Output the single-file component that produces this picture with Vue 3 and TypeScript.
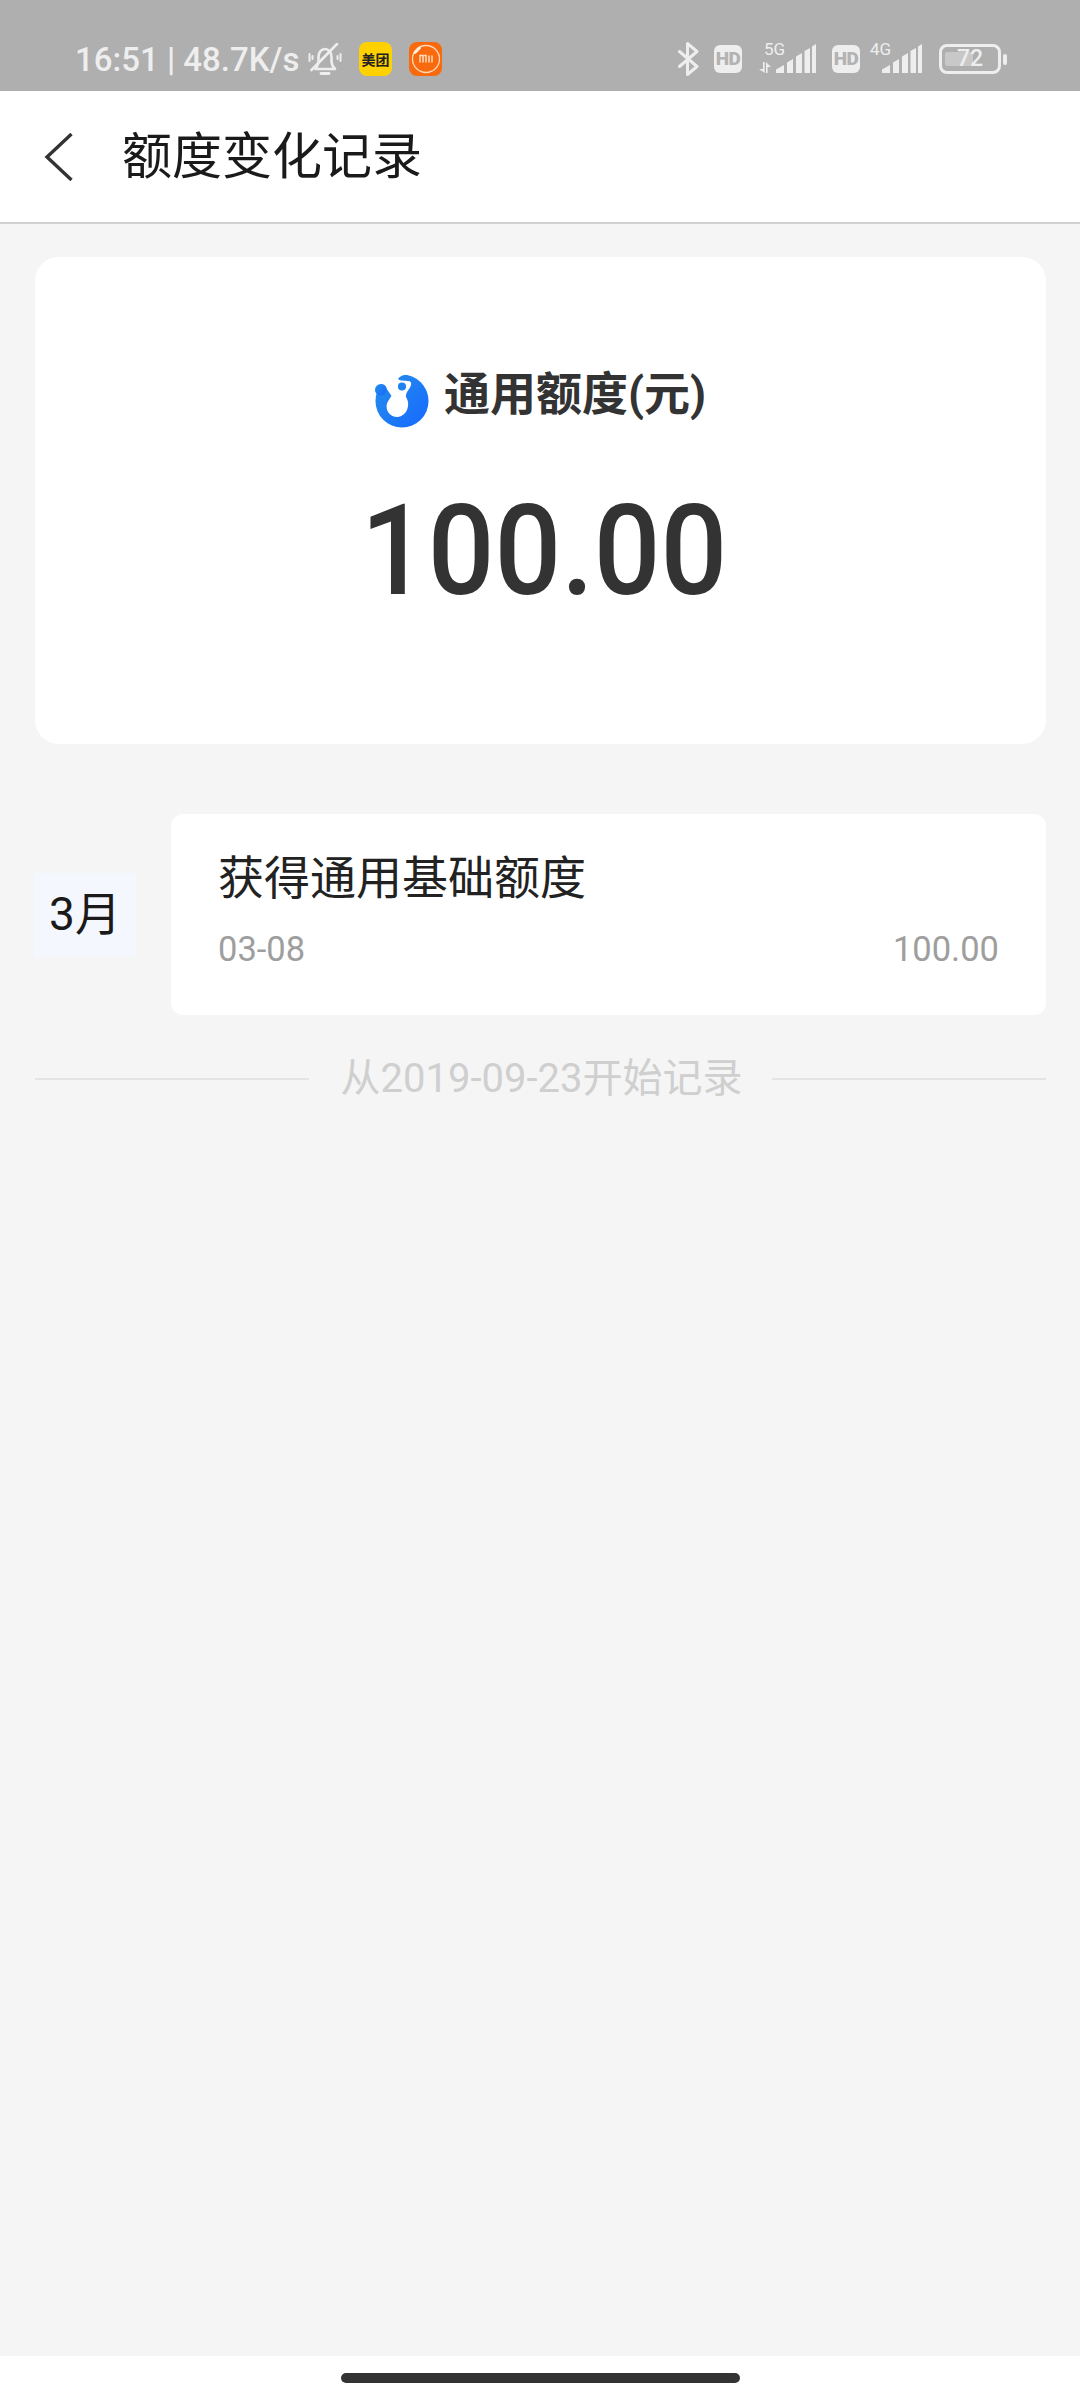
<script setup lang="ts">
const signalBars: string[] = [
  "M0 29V25.5L8 21V29z",
  "M11 29V18.5L17 15V29z",
  "M20 29V12.5L26 9V29z",
  "M28.5 29V7L34 4V29z",
  "M36 29V2.5L40 0V29z",
];
</script>

<template>
  <div class="page">
    <div class="status">
      <div class="status-left">
        <span class="clock">16:51 | 48.7K/s</span>
        <svg class="bell" width="34" height="32" viewBox="0 0 34 32" fill="none" stroke="#eee" stroke-width="2.6" stroke-linecap="round" stroke-linejoin="round">
          <path d="M7.500 26c1.500-2 3-4 3-8v-4c0-5 3-8 6.500-8 3.500 0 6.500 3 6.500 8v4c0 4 1.500 6 3.500 8z" />
          <path d="M3.500 27 29 1" />
          <path d="M13 30.500h8" stroke-width="2.800" />
          <path d="M1.500 11v7M4.500 13v3M32.500 11v7M29.500 13v3" stroke-width="2" />
        </svg>
        <span class="app meituan"><span class="mt-text">美团</span></span>
        <span class="app mi">
          <svg width="33" height="34" viewBox="0 0 33 34" fill="none">
            <circle cx="17" cy="17" r="13.500" stroke="#ffd9b8" stroke-width="1.300" />
            <path d="M6 10.500 10.500 6" stroke="#fff0e2" stroke-width="2.800" stroke-linecap="round" />
            <path d="M11 20.500v-7h6v7M14 13.500v7M20 20.500v-7M23 20.500v-7" stroke="#ffdcc0" stroke-width="1.500" />
          </svg>
        </span>
      </div>
      <div class="status-right">
        <svg class="bt" width="21" height="34" viewBox="0 0 21 34" fill="none" stroke="#eee" stroke-width="3" stroke-linejoin="round" stroke-linecap="round">
          <path d="M1.500 9.500 19 24.500 9.500 32.500V1.500L19 9.500 1.500 24.500" />
        </svg>
        <span class="hd">HD</span>
        <div class="net net-5g">
          <span class="gen">5G</span>
          <svg class="arrows" width="12" height="11" viewBox="0 0 12 11" fill="#eee">
            <path d="M4 0h1.600v11L0 7h4zM7 11V0l5 5H8.600v6z" />
          </svg>
          <svg class="sig" width="40" height="29" viewBox="0 0 40 29" fill="#eee">
            <path v-for="d in signalBars" :key="d" :d="d" />
          </svg>
        </div>
        <span class="hd hd2">HD</span>
        <div class="net net-4g">
          <span class="gen">4G</span>
          <svg class="sig" width="40" height="29" viewBox="0 0 40 29" fill="#eee">
            <path v-for="d in signalBars" :key="d" :d="d" />
          </svg>
        </div>
        <div class="battery">
          <div class="shell"><div class="fill"></div><span class="level">72</span></div>
          <div class="nub"></div>
        </div>
      </div>
    </div>

    <header class="nav">
      <svg class="back" width="30" height="48" viewBox="0 0 30 48" fill="none" stroke="#333" stroke-width="3.400">
        <path d="M28.500 1 4 24l24.500 23" />
      </svg>
      <h1 class="title">额度变化记录</h1>
    </header>

    <main class="content">
      <section class="summary">
        <div class="summary-label">
          <svg class="logo" width="54" height="55" viewBox="0 0 56 56">
            <defs>
              <linearGradient id="lg" x1="0" y1="0" x2="1" y2="1">
                <stop offset="0" stop-color="#2490ea" />
                <stop offset="1" stop-color="#1768ff" />
              </linearGradient>
            </defs>
            <circle cx="28" cy="28.500" r="27.500" fill="url(#lg)" />
            <path fill="#fff" d="M-1-1H34V1C30 1 25 3 24 6 26 8 30 7 36 8 38 9 38 12 36 15 34 18 32 20 32 24 34 27 35 31 34 35 33 41 28 45 23 45 17 45 12 41 12 34 12 30 15 27 17 23 15 20 13 18 11 13 8 10 3 10 1 14L-1 16z" />
            <circle cx="6" cy="17" r="6" fill="url(#lg)" />
            <circle cx="28" cy="13.500" r="4.200" fill="#1f82ee" />
          </svg>
          <span>通用额度(元)</span>
        </div>
        <div class="summary-value">100.00</div>
      </section>

      <section class="records">
        <div class="month">3月</div>
        <div class="record">
          <div class="record-title">获得通用基础额度</div>
          <div class="record-meta"><span>03-08</span><span>100.00</span></div>
        </div>
      </section>

      <div class="since">
        <span class="rule"></span>
        <span class="since-text">从2019-09-23开始记录</span>
        <span class="rule"></span>
      </div>
    </main>

    <footer class="gesture"><span class="pill"></span></footer>
  </div>
</template>

<style>
html, body { margin: 0; padding: 0; }
</style>

<style scoped>
.page {
  width: 1080px;
  height: 2400px;
  display: flex;
  flex-direction: column;
  background: #f5f5f5;
  font-family: Roboto, "Noto Sans CJK SC", sans-serif;
  overflow: hidden;
}
.status {
  height: 91px;
  box-sizing: border-box;
  background: #afafaf;
  display: flex;
  justify-content: space-between;
  padding: 42px 73px 0 75px;
  color: #eee;
  flex: none;
}
.status-left { display: flex; align-items: center; height: 34px; }
.clock { font-size: 33px; font-weight: 500; white-space: nowrap; width: 233px; }
.bell { margin-right: 17px; flex: none; }
.app { width: 33px; height: 34px; border-radius: 8px; display: flex; align-items: center; justify-content: center; flex: none; }
.meituan { background: #ffd100; margin-right: 17px; }
.mt-text { font-size: 14px; color: #222; font-weight: 700; white-space: nowrap; }
.mi { background: #f96a0e; }
.status-right { display: flex; align-items: flex-end; height: 34px; }
.bt { margin-right: 15px; flex: none; }
.hd {
  width: 28px; height: 28px; margin-bottom: 3px; border-radius: 6px; background: #eee; color: #b3b3b3;
  font-size: 19px; font-weight: 900; line-height: 28px; text-align: center; letter-spacing: -0.5px; flex: none;
}
.hd2 { margin-left: 16px; }
.net { position: relative; height: 30px; margin-left: 17px; margin-bottom: 3px; display: flex; align-items: flex-end; justify-content: flex-end; flex: none; }
.net-5g { width: 57px; }
.net-4g { width: 52px; margin-left: 10px; }
.gen { position: absolute; top: 0; left: 5px; font-size: 17px; line-height: 13px; color: #eee; }
.net-4g .gen { left: 0; }
.arrows { position: absolute; left: 0; bottom: 0; }
.sig { display: block; }
.battery { display: flex; align-items: center; margin-left: 17px; margin-bottom: 2px; flex: none; }
.shell {
  position: relative; width: 62px; height: 30px; box-sizing: border-box; border: 3px solid #eee; border-radius: 8px;
}
.fill { position: absolute; left: 3px; top: 5px; width: 28px; height: 14px; background: #c8c8c8; border-radius: 2px; }
.level { position: absolute; left: 15px; top: 0; font-size: 23px; line-height: 24px; color: #eee; font-weight: 500; }
.nub { width: 4px; height: 11px; margin-left: 2px; background: #eee; border-radius: 2px; }

.nav {
  height: 133px;
  box-sizing: border-box;
  background: #fff;
  border-bottom: 2px solid #d0d0d0;
  display: flex;
  align-items: center;
  padding-left: 43px;
  flex: none;
}
.back { flex: none; margin-top: 1px; }
.title { margin: 0 0 0 49px; font-size: 50px; font-weight: 400; color: #1a1a1a; line-height: 1; }

.content { flex: 1; padding: 33px 34px 0 35px; display: flex; flex-direction: column; }
.summary {
  height: 487px;
  background: #fff;
  border-radius: 24px;
  display: flex;
  flex-direction: column;
  align-items: center;
  box-sizing: border-box;
  padding-top: 102px;
}
.summary-label { display: flex; align-items: center; font-size: 46px; font-weight: 700; color: #333; line-height: 60px; }
.logo { margin-right: 15px; margin-top: 14px; flex: none; }
.summary-value { font-size: 127px; font-weight: 500; color: #333; line-height: 130px; margin-top: 58px; margin-left: 7px; transform: scaleX(0.925); }

.records { display: flex; align-items: center; margin-top: 70px; margin-left: -1px; }
.month {
  width: 102px; height: 84px; background: #f4f7fd; font-size: 46px; line-height: 82px; color: #1a1a1a; text-align: center; flex: none;
}
.record {
  flex: 1; margin-left: 35px; height: 201px; box-sizing: border-box; background: #fff; border-radius: 12px; padding: 31px 47px 0 47px;
}
.record-title { font-size: 46px; line-height: 66px; color: #222; }
.record-meta { display: flex; justify-content: space-between; font-size: 34.500px; color: #9e9e9e; margin-top: 17px; line-height: 42px; }

.since { display: flex; align-items: center; margin-top: 40px; }
.rule { flex: 1; height: 2px; background: #e3e5e5; }
.since-text { margin: 0 30px 0 32px; font-size: 40px; color: #cfcfcf; line-height: 48px; white-space: nowrap; }

.gesture { height: 44px; background: #fff; display: flex; justify-content: center; flex: none; box-sizing: border-box; padding-top: 17px; }
.pill { width: 399px; height: 10px; border-radius: 5px; background: #333; }
</style>
